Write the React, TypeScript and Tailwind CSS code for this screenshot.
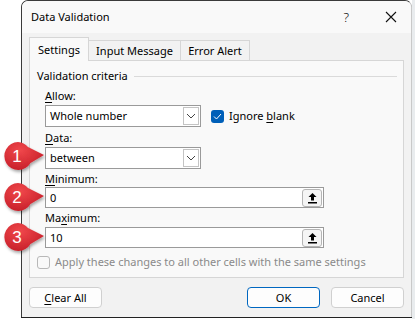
import React from "react";

const U = ({ children }: { children: React.ReactNode }) => (
  <span className="underline underline-offset-2">{children}</span>
);

function Chevron() {
  return (
    <svg width="10" height="6" viewBox="0 0 10 6">
      <path d="M1 1 L5 5 L9 1" fill="none" stroke="#444" strokeWidth="1" />
    </svg>
  );
}

function Select({ value }: { value: string }) {
  return (
    <div className="flex h-[22px] w-[156px] items-center border border-[#9a9a9a] bg-white">
      <div className="flex-1 pl-[4px] text-[11px] leading-[14px] text-black">{value}</div>
      <div className="mr-px flex h-[18px] w-[16px] items-center justify-center border border-[#c4c4c4] bg-white">
        <Chevron />
      </div>
    </div>
  );
}

function UploadIcon() {
  return (
    <svg width="11" height="12" viewBox="0 0 11 12">
      <path d="M5.5 1 L1.5 5 L4 5 L4 8.5 L7 8.5 L7 5 L9.5 5 Z" fill="#000" />
      <rect x="1" y="10" width="9" height="1.5" fill="#000" />
    </svg>
  );
}

function RefInput({ value }: { value: string }) {
  return (
    <div className="flex h-[21px] w-[279px] items-center border border-[#9a9a9a] bg-white">
      <div className="flex-1 pl-[4px] text-[11px] leading-[14px] text-black">{value}</div>
      <div className="mr-px flex h-[18px] w-[20px] items-center justify-center rounded-[3px] border border-[#b5b5b5] bg-[#f5f5f5]">
        <UploadIcon />
      </div>
    </div>
  );
}

function Badge({ n, top }: { n: string; top: number }) {
  return (
    <svg
      className="absolute left-0"
      style={{ top }}
      width="50"
      height="36"
      viewBox="0 0 50 36"
    >
      <defs>
        <radialGradient id={"g" + n} cx="40%" cy="30%" r="70%">
          <stop offset="0%" stopColor="#f0474b" />
          <stop offset="100%" stopColor="#c8202a" />
        </radialGradient>
        <filter id={"s" + n} x="-20%" y="-20%" width="150%" height="150%">
          <feDropShadow dx="1" dy="2" stdDeviation="1.5" floodColor="#000" floodOpacity="0.35" />
        </filter>
      </defs>
      <g filter={`url(#s${n})`}>
        <path
          d="M18 3 A14 14 0 1 0 30.5 24 L44 16 L28 8 A14 14 0 0 0 18 3 Z"
          fill={`url(#g${n})`}
        />
      </g>
      <text
        x="17"
        y="23"
        textAnchor="middle"
        fontSize="17"
        fill="#fff"
        fontFamily="Liberation Sans, Arial, sans-serif"
      >
        {n}
      </text>
    </svg>
  );
}

export default function App() {
  return (
    <div
      className="relative flex h-[319px] w-[415px] overflow-hidden bg-white text-[11px] leading-[16px]"
      style={{ fontFamily: '"Noto Sans", "Open Sans", sans-serif' }}
    >
      <div className="w-[21px] shrink-0 bg-white" />
      <div className="flex h-[317px] w-[391px] shrink-0 flex-col overflow-hidden rounded-t-[7px] border-l border-t border-r border-[#3a3a3a] border-r-[#c9c9c9] bg-[#f2f2f2] shadow-[0_1px_0_#222]">
        {/* title bar */}
        <div className="flex h-[32px] items-center bg-[#f9f9f9] pl-[9px] pr-[14px] text-black">
          <div className="flex-1">Data Validation</div>
          <div className="mr-[36px] text-[13px] font-light">?</div>
          <svg width="12" height="12" viewBox="0 0 12 12">
            <path d="M1 1 L11 11 M11 1 L1 11" stroke="#111" strokeWidth="1.1" />
          </svg>
        </div>
        {/* tabs */}
        <div className="flex flex-col px-[7px] pt-[4px]">
          <div className="flex items-end">
            <div className="relative z-10 -mb-px flex h-[24px] w-[60px] items-center justify-center border border-b-0 border-[#d6d6d6] bg-[#f9f9f9] text-black">
              Settings
            </div>
            <div className="flex h-[20px] w-[92px] items-center justify-center border border-l-0 border-b-0 border-[#d6d6d6] bg-[#f2f2f2] text-black">
              Input Message
            </div>
            <div className="flex h-[20px] w-[69px] items-center justify-center border border-l-0 border-b-0 border-[#d6d6d6] bg-[#f2f2f2] text-black">
              Error Alert
            </div>
          </div>
          <div className="flex h-[218px] flex-col border border-[#d6d6d6] bg-[#f9f9f9] pl-[7px] pr-[6px] pt-[7px] text-black">
            <div className="flex h-[16px] items-center gap-[6px]">
              <span>Validation criteria</span>
              <div className="h-px flex-1 bg-[#dadada]" />
            </div>
            <div className="pl-[8px]">
              <div className="mt-[4px] h-[16px]">
                <U>A</U>llow:
              </div>
              <div className="mt-[1px] flex items-center">
                <Select value="Whole number" />
                <div className="ml-[10px] flex h-[13px] w-[13px] items-center justify-center rounded-[3px] bg-[#005fb8]">
                  <svg width="9" height="7" viewBox="0 0 9 7">
                    <path d="M1 3.5 L3.5 6 L8 1" fill="none" stroke="#fff" strokeWidth="1" />
                  </svg>
                </div>
                <span className="ml-[5px]">
                  Ignore <U>b</U>lank
                </span>
              </div>
              <div className="mt-[3px] h-[16px]">
                <U>D</U>ata:
              </div>
              <div className="mt-[1px]">
                <Select value="between" />
              </div>
              <div className="mt-[2px] h-[16px]">
                <U>M</U>inimum:
              </div>
              <div>
                <RefInput value="0" />
              </div>
              <div className="mt-[2px] h-[16px]">
                Ma<U>x</U>imum:
              </div>
              <div className="mt-[1px]">
                <RefInput value="10" />
              </div>
            </div>
            <div className="mt-[7px] flex h-[14px] items-center">
              <div className="h-[13px] w-[13px] rounded-[3px] border border-[#b8b8b8] bg-[#f9f9f9]" />
              <span className="ml-[5px] text-[#8a8a8a]">
                Apply these changes to all other cells with the same settings
              </span>
            </div>
          </div>
        </div>
        {/* buttons */}
        <div className="mt-[9px] flex items-center px-[7px] text-black">
          <div className="flex h-[21px] w-[73px] items-center justify-center rounded-[4px] border border-[#d0d0d0] bg-[#fdfdfd]">
            <U>C</U>lear All
          </div>
          <div className="flex-1" />
          <div className="flex h-[21px] w-[73px] items-center justify-center rounded-[4px] border border-[#0067c0] bg-[#fdfdfd]">
            OK
          </div>
          <div className="ml-[11px] flex h-[21px] w-[73px] items-center justify-center rounded-[4px] border border-[#d0d0d0] bg-[#fdfdfd]">
            Cancel
          </div>
        </div>
      </div>
      <div className="flex-1 bg-[#e9ecee]" />
      <Badge n="1" top={139} />
      <Badge n="2" top={180} />
      <Badge n="3" top={220} />
    </div>
  );
}
